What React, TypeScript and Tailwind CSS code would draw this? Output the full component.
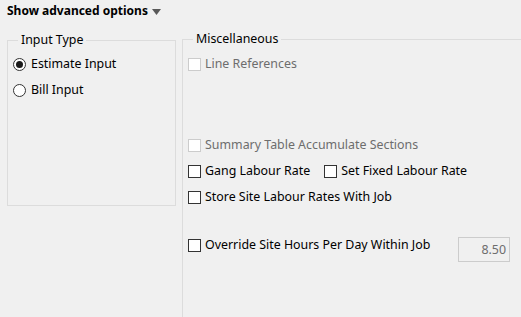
import React from "react";

function Radio({ checked, label }: { checked?: boolean; label: string }) {
  return (
    <label className="flex h-[26px] items-center gap-[5px]">
      <span className="flex h-[13px] w-[13px] items-center justify-center rounded-full border border-[#333333] bg-white">
        {checked && <span className="h-[7px] w-[7px] rounded-full bg-[#1a1a1a]" />}
      </span>
      <span>{label}</span>
    </label>
  );
}

function Check({ label, disabled }: { label: string; disabled?: boolean }) {
  return (
    <label className="flex h-[26px] items-center gap-[4px]">
      <span
        className={
          disabled
            ? "h-[13px] w-[13px] border border-[#cccccc] bg-white"
            : "h-[13px] w-[13px] border border-[#333333] bg-white"
        }
      />
      <span className={disabled ? "text-[#6d6d6d]" : "text-black"}>{label}</span>
    </label>
  );
}

export default function App() {
  return (
    <div className="h-[317px] w-[521px] overflow-hidden bg-[#f0f0f0] font-['Noto_Sans',sans-serif] text-[12.4px] leading-[16px] text-black">
      <div className="flex h-[32px] items-start gap-[4px] pl-[7px] pt-[3px]">
        <span className="text-[12px] font-bold">Show advanced options</span>
        <svg width="9" height="7" viewBox="0 0 9 7" className="mt-[6px]">
          <polygon points="0,0 9,0 4.5,6" fill="#595959" />
        </svg>
      </div>

      <div className="flex items-start">
        <fieldset className="ml-[7px] h-[174px] w-[169px] border border-[#dcdcdc] px-[5px] pt-[3px]">
          <legend className="ml-[5px] px-[3px]">Input Type</legend>
          <Radio checked label="Estimate Input" />
          <Radio label="Bill Input" />
        </fieldset>

        <fieldset className="-mt-px ml-[6px] h-[300px] flex-1 border-t border-l border-[#dcdcdc] pl-[5px] pt-[4px]">
          <legend className="ml-[5px] px-[3px]">Miscellaneous</legend>
          <Check disabled label="Line References" />
          <div className="mt-[55px]">
            <Check disabled label="Summary Table Accumulate Sections" />
          </div>
          <div className="flex gap-[14px]">
            <Check label="Gang Labour Rate" />
            <Check label="Set Fixed Labour Rate" />
          </div>
          <Check label="Store Site Labour Rates With Job" />
          <div className="mt-[22px] flex items-start justify-between pr-[11px]">
            <Check label="Override Site Hours Per Day Within Job" />
            <div className="mt-[5px] flex h-[25px] w-[52px] items-center justify-end border border-[#cccccc] bg-[#f0f0f0] pr-[3px] text-[#6d6d6d]">
              8.50
            </div>
          </div>
        </fieldset>
      </div>
    </div>
  );
}
